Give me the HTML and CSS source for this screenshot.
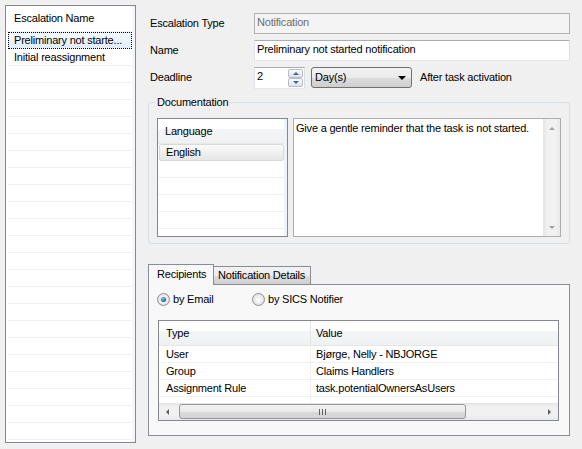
FILE: index.html
```html
<!DOCTYPE html>
<html lang="en">
  <head>
    <meta charset="utf-8">
    <title>Escalations</title>
    <link rel="stylesheet" href="styles.css">
  </head>
  <body>

    <div id="wrap">

      <!-- escalation list -->
      <div class="escList">
        <div class="listHead">Escalation Name</div>
        <ul>
          <li class="on">Preliminary not starte...</li>
          <li>Initial reassignment</li>
          <li></li><li></li><li></li><li></li><li></li><li></li><li></li>
          <li></li><li></li><li></li><li></li><li></li><li></li><li></li>
          <li></li><li></li><li></li><li></li><li></li><li></li><li></li>
          <li></li><li></li>
        </ul>
      </div>

      <!-- detail -->
      <div class="detail">
        <div class="field">
          <label>Escalation Type</label>
          <div class="ipt disabled">Notification</div>
        </div>
        <div class="field">
          <label>Name</label>
          <div class="ipt">Preliminary not started notification</div>
        </div>
        <div class="field last">
          <label>Deadline</label>
          <div class="spin">
            <span class="spinVal">2</span>
            <span class="spinBtns"><i class="up"></i><i class="down"></i></span>
          </div>
          <div class="combo"><span>Day(s)</span><i class="caret"></i></div>
          <span class="after">After task activation</span>
        </div>

        <fieldset class="docBox">
          <legend>Documentation</legend>
          <div class="docInner">
            <div class="langList">
              <div class="langHead">Language</div>
              <ul>
                <li class="sel">English</li>
                <li></li><li></li><li></li><li></li><li></li>
              </ul>
            </div>
            <div class="docText">
              <p>Give a gentle reminder that the task is not started.</p>
              <div class="vscroll"><i class="arr up"></i><i class="arr down"></i></div>
            </div>
          </div>
        </fieldset>

        <div class="tabs">
          <div class="tabStrip">
            <span class="tab on">Recipients</span>
            <span class="tab off">Notification Details</span>
          </div>
          <div class="tabPanel">
            <div class="radios">
              <span class="radio on"><i></i>by Email</span>
              <span class="radio"><i></i>by SICS Notifier</span>
            </div>
            <div class="grid">
              <div class="gridHead"><span class="col1">Type</span><span class="col2">Value</span></div>
              <div class="gridBody">
                <div class="gridRow"><span class="col1">User</span><span class="col2">Bjørge, Nelly - NBJORGE</span></div>
                <div class="gridRow"><span class="col1">Group</span><span class="col2">Claims Handlers</span></div>
                <div class="gridRow"><span class="col1">Assignment Rule</span><span class="col2">task.potentialOwnersAsUsers</span></div>
                <div class="gridRow"><span class="col1"></span><span class="col2"></span></div>
              </div>
              <div class="hscroll">
                <i class="arr left"></i>
                <span class="thumb"><b class="grip"></b></span>
                <i class="arr right"></i>
              </div>
            </div>
          </div>
        </div>
      </div>

    </div>

  </body>
</html>
```

FILE: styles.css
```css
* {
	margin:0;
	padding:0;
	box-sizing:border-box;
}

html, body {width:582px;height:449px;overflow:hidden;}
body {background:#f0f0f0;color:#000;font-family:"Liberation Sans",Arial,sans-serif;font-size:11px;line-height:13px;letter-spacing:-0.2px;}
ul, li {list-style:none;}
i, b {display:block;font-style:normal;}

#wrap {display:flex;align-items:flex-start;padding:5px 0 0 5px;}

/* escalation list */
.escList {width:131px;height:438px;border:1px solid #828790;background:linear-gradient(90deg,#fff 126px,#f3f6fa 126px);overflow:hidden;}
.listHead {height:26px;padding:6px 0 0 8px;margin-right:3px;background:#fff;border-bottom:1px solid #f2f2f2;}
.escList li {height:17px;margin:0 3px 0 2px;padding:2px 0 0 6px;border-bottom:1px solid #f0f0f0;background:#fff;white-space:nowrap;}
.escList li.on {padding:1px 0 0 5px;border:1px dotted #000;background:linear-gradient(#f4f9fe,#e0edfa);}

/* detail */
.detail {width:422px;margin-left:12px;padding-top:8px;}
.field {display:flex;align-items:center;height:21px;margin-bottom:6px;}
.field.last {margin-bottom:0;}
.field label {width:106px;padding-left:2px;}
.ipt {flex:1;height:21px;padding:2px 2px 0;border:1px solid;border-color:#abadb3 #dbdfe6 #e3e9ef #e2e3ea;background:#fff;white-space:nowrap;}
.ipt.disabled {border-color:#adb2b5;background:#f4f4f4;color:#6d6d6d;}

.spin {display:flex;width:51px;height:22px;border:1px solid;border-color:#abadb3 #dbdfe6 #e3e9ef #e2e3ea;background:#fff;}
.spinVal {flex:1;padding:2px 0 0 2px;}
.spinBtns {display:flex;flex-direction:column;width:16px;padding:1px 1px 1px 0;}
.spinBtns i {flex:1;display:flex;align-items:center;justify-content:center;border:1px solid #b7bec8;border-radius:2px;background:linear-gradient(#f8fafc,#dce3ee);}
.spinBtns i::after {content:"";border-left:3px solid transparent;border-right:3px solid transparent;}
.spinBtns .up::after {border-bottom:3px solid #4e6283;}
.spinBtns .down::after {border-top:3px solid #4e6283;}

.combo {display:flex;align-items:center;justify-content:space-between;width:101px;height:21px;margin-left:6px;padding:0 5px 0 3px;border:1px solid #707070;border-radius:3px;background:linear-gradient(#f2f2f2 0,#ebebeb 50%,#dddddd 51%,#cfcfcf 100%);}
.caret {width:0;height:0;border-left:4px solid transparent;border-right:4px solid transparent;border-top:4px solid #000;}
.after {margin-left:8px;}

/* documentation */
.docBox {margin-top:8px;padding:9px 8px 6px;border:1px solid #d5dfe5;border-radius:3px;}
.docBox legend {margin-left:-2px;padding:0 2px;}
.docInner {display:flex;height:119px;}
.langList {width:131px;border:1px solid #828790;background:linear-gradient(90deg,#fff 126px,#eef3f9 126px);overflow:hidden;}
.langHead {height:25px;margin-right:3px;padding:6px 0 0 7px;border-bottom:1px solid #e8e8e8;background:linear-gradient(#fff 0,#fff 40%,#f4f5f7 41%,#f0f1f3 100%);}
.langList li {height:17px;margin-right:3px;border-bottom:1px solid #f0f0f0;background:#fff;}
.langList li.sel {margin-left:1px;padding:1px 0 0 6px;border:1px solid #d9d9d9;border-radius:2px;background:linear-gradient(#fafafa,#e6e6e6);}
.docText {display:flex;width:268px;margin-left:5px;border:1px solid #abadb3;background:#fff;}
.docText p {flex:1;padding:3px 2px;}
.vscroll {display:flex;flex-direction:column;justify-content:space-between;align-items:center;width:17px;padding:8px 0 7px;background:linear-gradient(90deg,#e3e3e3,#f1f1f1 25%,#f1f1f1 75%,#e8e8e8);}
.arr {width:0;height:0;}
.arr.up {border-left:3px solid transparent;border-right:3px solid transparent;border-bottom:3px solid #a3a3a3;}
.arr.down {border-left:3px solid transparent;border-right:3px solid transparent;border-top:3px solid #a3a3a3;}

/* tabs */
.tabs {margin-top:20px;}
.tabStrip {display:flex;align-items:flex-end;height:20px;}
.tab {height:18px;padding:2px 0 0 4px;border:1px solid #898c95;border-bottom:0;background:linear-gradient(#f2f2f2 0,#ebebeb 50%,#dddddd 51%,#cfcfcf 100%);white-space:nowrap;}
.tab.on {position:relative;z-index:1;width:66px;height:21px;margin-bottom:-1px;padding:3px 0 0 8px;background:#f8f8f8;}
.tab.off {width:98px;margin-left:-1px;}
.tabPanel {height:152px;padding:7px 8px 0 9px;border:1px solid #898c95;background:#f8f8f8;}

.radios {display:flex;height:14px;margin:0 0 14px -1px;}
.radio {display:flex;align-items:center;}
.radio:first-child {width:95px;}
.radio i {display:flex;align-items:center;justify-content:center;width:13px;height:13px;margin-right:3px;border:1px solid #8e8f8f;border-radius:50%;background:radial-gradient(circle,#fff 0,#eee 45%,#d3d3d3 100%);}
.radio.on i::after {content:"";width:5px;height:5px;border-radius:50%;background:radial-gradient(circle at 40% 35%,#8cc6f0,#1d5ea6 65%,#0f3c70);}

/* grid */
.grid {display:flex;flex-direction:column;width:401px;height:101px;border:1px solid #828790;background:#fff;}
.gridHead {display:flex;height:25px;border-bottom:1px solid #e5e5e5;background:linear-gradient(#fff 0,#fff 40%,#f4f5f7 41%,#f0f1f3 100%);}
.gridHead span {padding-top:6px;}
.gridHead .col1 {border-right:1px solid #e5e5e5;}
.col1 {width:152px;padding-left:7px;border-right:1px solid #f0f0f0;}
.col2 {flex:1;padding-left:5px;}
.gridBody {flex:1;overflow:hidden;}
.gridRow {display:flex;height:17px;border-bottom:1px solid #f0f0f0;}
.gridRow span {padding-top:2px;white-space:nowrap;}

.hscroll {display:flex;align-items:center;height:17px;background:linear-gradient(#e3e3e3,#f1f1f1 25%,#f1f1f1 75%,#e8e8e8);}
.hscroll .arr {margin:0 7px;}
.arr.left {border-top:3px solid transparent;border-bottom:3px solid transparent;border-right:3px solid #5e5e5e;}
.arr.right {margin-left:auto;border-top:3px solid transparent;border-bottom:3px solid transparent;border-left:3px solid #5e5e5e;}
.thumb {display:flex;align-items:center;justify-content:center;width:287px;height:15px;margin-left:3px;border:1px solid #979797;border-radius:3px;background:linear-gradient(#f3f3f3 0,#e9e9e9 50%,#dadada 51%,#d4d4d4 100%);}
.grip {width:7px;height:6px;background:repeating-linear-gradient(90deg,#606060 0,#606060 1px,transparent 1px,transparent 3px);}
```
